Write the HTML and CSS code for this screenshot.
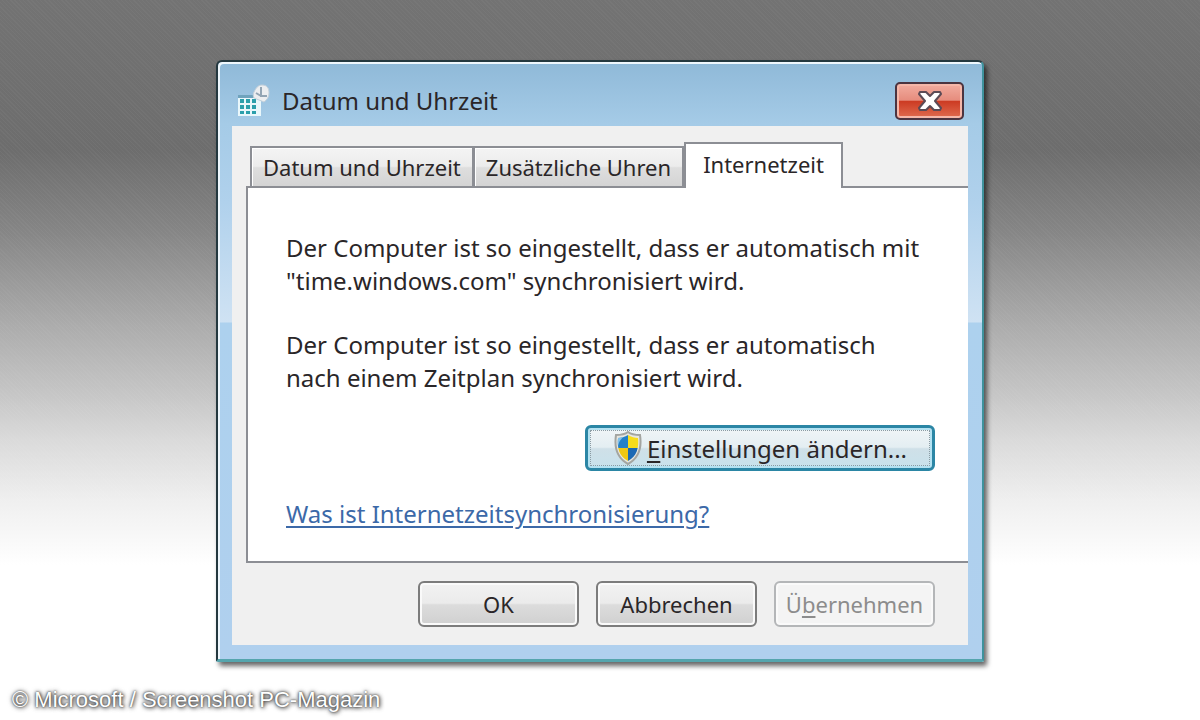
FILE: index.html
```
<!DOCTYPE html>
<html lang="de">
<head>
    <meta charset="utf-8">
    <title>Datum und Uhrzeit</title>
    <link rel="stylesheet" href="styles.css">
</head>
<body>
    <main class="window">
        <header class="titlebar">
            <svg class="title-icon" viewBox="0 0 34 34" aria-hidden="true">
                <path d="M2 12h23v20H2z" fill="#e9f7fb"/>
                <path d="M2 11h17v3H2z" fill="#6fa3bd"/>
                <path d="M4 15h4v4H4zM10 15h4v4h-4zM16 15h4v4h-4zM4 21h4v4H4zM10 21h4v4h-4zM16 21h4v4h-4zM4 27h4v3H4zM10 27h4v3h-4zM16 27h4v3h-4z" fill="#2b9fab"/>
                <path d="M26 1c5 0 7 3 7 8 0 4-2 7-5 9l-10-4c-1-2-1-4 0-6 2-4 4-7 8-7z" fill="#eceef0" stroke="#c3d0da"/>
                <path d="M25 3v9h6M25 12l-5-3" fill="none" stroke="#93a5b4" stroke-width="2"/>
            </svg>
            <h1>Datum und Uhrzeit</h1>
            <button class="close" type="button" aria-label="Schließen">
                <svg viewBox="0 0 26 22" aria-hidden="true">
                    <path d="M3 2h6l4 4 4-4h6l1 2-6 7 6 7-1 2h-6l-4-4-4 4H3l-1-2 6-7-6-7z" fill="#fff" stroke="#5b4a55" stroke-width="2" stroke-linejoin="round"/>
                </svg>
            </button>
        </header>

        <div class="client">
            <div class="tabs" role="tablist">
                <button class="tab" type="button" role="tab">Datum und Uhrzeit</button>
                <button class="tab" type="button" role="tab">Zusätzliche Uhren</button>
                <button class="tab active" type="button" role="tab" aria-selected="true">Internetzeit</button>
            </div>

            <section class="panel" role="tabpanel">
                <p>Der Computer ist so eingestellt, dass er automatisch mit<br>"time.windows.com" synchronisiert wird.</p>
                <p>Der Computer ist so eingestellt, dass er automatisch<br>nach einem Zeitplan synchronisiert wird.</p>
                <button class="settings" type="button">
                    <svg class="shield" viewBox="0 0 30 34" aria-hidden="true">
                        <defs>
                            <clipPath id="shield-clip">
                                <path d="M15 4c3 2 7 3 10 3 1 10-1 18-10 23C6 25 4 17 5 7c3 0 7-1 10-3z"/>
                            </clipPath>
                        </defs>
                        <path d="M15 1c4 3 8 3 12 3 2 13-1 23-12 29C4 27 1 17 3 4c4 0 8 0 12-3z" fill="#e6e6e0" stroke="#a3a5a1" stroke-width="2"/>
                        <g clip-path="url(#shield-clip)">
                            <path d="M0 0h15v17H0z" fill="#2380c8"/>
                            <path d="M15 0h15v17H15z" fill="#f7dc1c"/>
                            <path d="M0 17h15v17H0z" fill="#f0c713"/>
                            <path d="M15 17h15v17H15z" fill="#1c69b4"/>
                            <path d="M5 15c1-5 4-9 9-11H4z" fill="#7fc0ea"/>
                        </g>
                    </svg>
                    <span><u>E</u>instellungen ändern...</span>
                </button>
                <a class="help" href="#">Was ist Internetzeitsynchronisierung?</a>
            </section>

            <div class="actions">
                <button class="btn" type="button">OK</button>
                <button class="btn" type="button">Abbrechen</button>
                <button class="btn" type="button" disabled><span>Ü<u>b</u>ernehmen</span></button>
            </div>
        </div>
    </main>

    <footer class="credit">© Microsoft / Screenshot PC-Magazin</footer>
</body>
</html>
```
FILE: styles.css
```
* {
    box-sizing: border-box;
}

body {
    margin: 0;
    min-height: 100vh;
    padding-top: 60px;
    display: flex;
    flex-direction: column;
    align-items: center;
    font-family: "Noto Sans", "Open Sans", sans-serif;
    font-size: 24px;
    line-height: 33px;
    color: #2a2628;
    background:
        repeating-linear-gradient(45deg, rgba(255, 255, 255, 0.03) 0 1px, transparent 1px 3px),
        linear-gradient(#737373 0, #6d6d6d 150px, #858585 230px, #acacac 326px, #c4c4c4 390px, #dadada 440px, #efefef 500px, #fff 565px);
}

button {
    font: inherit;
    color: inherit;
    cursor: pointer;
}

/* Window frame */
.window {
    width: 64%;
    padding: 0 14px 14px;
    border: 2px solid #24383f;
    border-right-color: #3e929c;
    border-bottom: 3px solid #55a5ad;
    border-radius: 6px 6px 2px 2px;
    background: linear-gradient(#8fb9d8 0, #a5cbe7 62px, #b0d1ec 140px, #cfe2f3 260px, #add1ee 261px, #b0d0ee 100%);
    box-shadow: inset 2px 2px 0 #eef7fd, 3px 4px 5px rgba(0, 0, 0, 0.6);
}

.titlebar {
    display: flex;
    align-items: center;
    gap: 12px;
    height: 64px;
    padding: 13px 4px 0;
}

.titlebar h1 {
    flex: 1;
    margin: 0;
    font-size: 24px;
    font-weight: 400;
}

.title-icon {
    width: 34px;
    height: 34px;
}

.close {
    display: flex;
    align-items: center;
    justify-content: center;
    width: 69px;
    height: 38px;
    padding: 0;
    border: 2px solid #4b3440;
    border-radius: 5px;
    background: linear-gradient(#f2ada0, #e68c7d 48%, #cc3a22 50%, #e06c50);
    box-shadow: inset 0 0 0 2px #f5b7a9;
}

.close svg {
    width: 26px;
    height: 22px;
}

.client {
    padding: 16px 0 18px 14px;
    background: #f0f0f0;
}

/* Tabs */
.tabs {
    display: flex;
    align-items: flex-end;
    padding-left: 4px;
    font-size: 22px;
}

.tab {
    height: 40px;
    padding: 0 11px;
    border: 2px solid #8c8e94;
    border-bottom: 0;
    background: linear-gradient(#f4f4f4, #ececec 48%, #dedede 52%, #d4d4d4);
    box-shadow: inset 1px 1px 0 #fff;
    white-space: nowrap;
}

.tab + .tab {
    border-left-width: 1px;
}

.tab.active {
    height: 46px;
    margin-bottom: -2px;
    padding: 0 17px 4px;
    border-left-width: 2px;
    background: #fff;
    z-index: 1;
}

.panel {
    display: flex;
    flex-direction: column;
    align-items: flex-start;
    padding: 43px 33px 31px 38px;
    border: 2px solid #8c8e94;
    border-right: 0;
    background: #fff;
}

.panel p {
    margin: 0 0 31px;
    white-space: nowrap;
}

.settings {
    display: flex;
    align-items: center;
    justify-content: center;
    align-self: flex-end;
    gap: 4px;
    width: 350px;
    height: 46px;
    margin-bottom: 26px;
    padding: 0;
    border: 3px solid #2b86a5;
    border-radius: 6px;
    outline: 1px dotted #8a9ba3;
    outline-offset: -6px;
    background: linear-gradient(#f0f5f7, #e4eef2 48%, #cfe0e8 52%, #c8e2ec);
    box-shadow: inset 0 0 0 2px #b4e2f2;
}

.shield {
    width: 30px;
    height: 34px;
}

u {
    text-decoration-thickness: 2px;
    text-underline-offset: 3px;
}

.help {
    color: #3c69a8;
    text-decoration-thickness: 2px;
    text-underline-offset: 3px;
}

/* Dialog buttons */
.actions {
    display: flex;
    justify-content: flex-end;
    gap: 17px;
    padding: 18px 33px 0 0;
}

.btn {
    width: 161px;
    height: 46px;
    padding: 0;
    border: 2px solid #7c7c7c;
    border-radius: 6px;
    background: linear-gradient(#f2f2f2, #ebebeb 48%, #dcdcdc 52%, #d0d0d0);
    box-shadow: inset 0 0 0 2px #fafafa;
    font-size: 22px;
}

.btn:disabled {
    border-color: #b4b6b8;
    background: #f4f4f4;
    color: #8c8c8c;
    cursor: default;
}

.credit {
    align-self: flex-start;
    margin-top: auto;
    padding: 0 12px 4px;
    font-family: "Liberation Sans", Arial, sans-serif;
    font-size: 22px;
    color: #fff;
    text-shadow: 0 0 2px #333, 1px 1px 4px #444, 0 0 5px #777;
}
```
